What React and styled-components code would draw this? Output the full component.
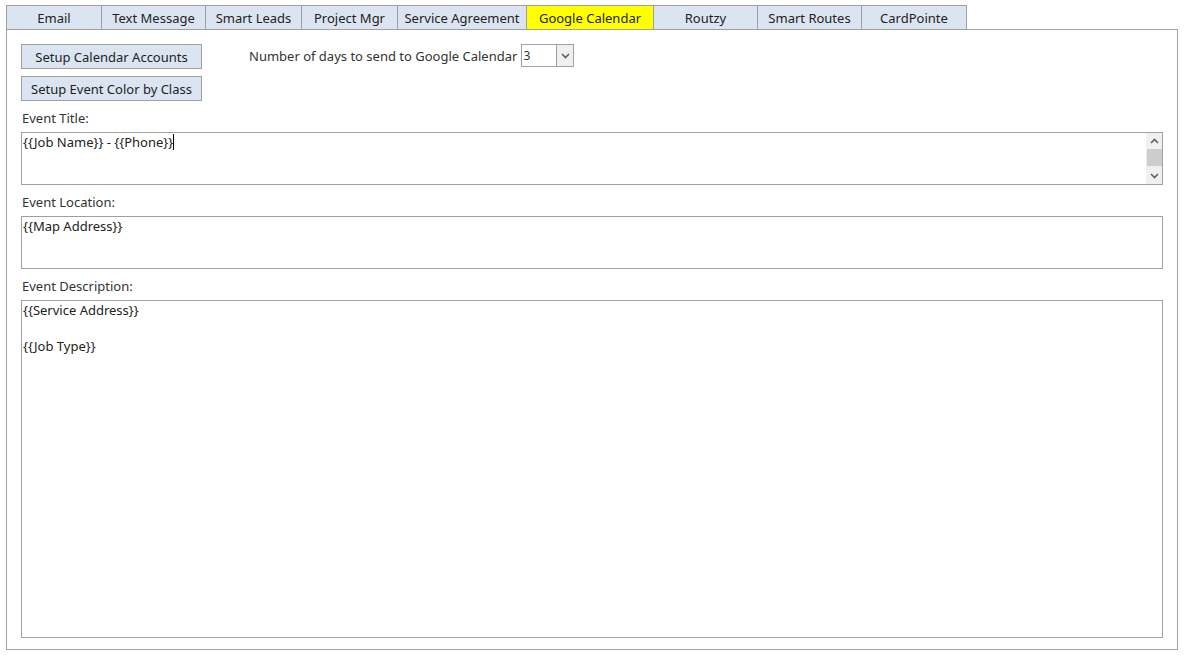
import React from "react";
import styled, { createGlobalStyle } from "styled-components";

const GlobalStyle = createGlobalStyle`
  body {
    margin: 0;
    background: #ffffff;
    font-family: "Noto Sans", "Open Sans", sans-serif;
    font-size: 13px;
    color: #222;
  }
`;

const Page = styled.div`
  width: 1185px;
  height: 655px;
  padding: 5px 7px 5px 6px;
  box-sizing: border-box;
  display: flex;
  flex-direction: column;
`;

const TabBar = styled.div`
  display: flex;
  height: 24px;
`;

const Tab = styled.div`
  width: ${(p) => p.w}px;
  box-sizing: border-box;
  border: 1px solid #a0a0a0;
  border-left-width: ${(p) => (p.first ? 1 : 0)}px;
  border-bottom: none;
  background: ${(p) => (p.active ? "#ffff00" : "#dbe5f1")};
  display: flex;
  align-items: center;
  justify-content: center;
  white-space: nowrap;
  font-size: 13px;
  color: #222;
`;

const Panel = styled.div`
  flex: 1;
  border: 1px solid #a0a0a0;
  padding: 14px 14px 11px 14px;
  display: flex;
  flex-direction: column;
`;

const TopRow = styled.div`
  display: flex;
  gap: 47px;
`;

const ButtonCol = styled.div`
  display: flex;
  flex-direction: column;
  gap: 7px;
`;

const Button = styled.div`
  width: 181px;
  height: 25px;
  box-sizing: border-box;
  border: 1px solid #a0a0a0;
  background: #dbe5f1;
  display: flex;
  align-items: center;
  justify-content: center;
  font-size: 13px;
  color: #222;
`;

const DaysRow = styled.div`
  display: flex;
  align-items: center;
  height: 23px;
  gap: 4px;
  color: #333;
`;

const Select = styled.div`
  width: 53px;
  height: 23px;
  box-sizing: border-box;
  border: 1px solid #a0a0a0;
  display: flex;
  align-items: stretch;
`;

const SelectValue = styled.div`
  flex: 1;
  padding-left: 1px;
  display: flex;
  align-items: center;
  font-size: 12px;
`;

const SelectArrow = styled.div`
  width: 16px;
  border-left: 1px solid #a0a0a0;
  background: #f0f0f0;
  display: flex;
  align-items: center;
  justify-content: center;
`;

const Label = styled.div`
  margin-top: ${(p) => p.top}px;
  height: 17px;
  line-height: 17px;
  color: #333;
  padding-left: 1px;
`;

const Field = styled.div`
  margin-top: 5px;
  height: ${(p) => p.h}px;
  ${(p) => (p.grow ? "flex: 1;" : "")}
  box-sizing: border-box;
  width: 1142px;
  border: 1px solid #a0a0a0;
  display: flex;
`;

const FieldText = styled.div`
  flex: 1;
  padding: 0 1px;
  line-height: 18px;
  white-space: pre-wrap;
  color: #222;
`;

const Caret = styled.span`
  display: inline-block;
  width: 1px;
  height: 16px;
  background: #000;
  vertical-align: -3px;
`;

const ScrollBar = styled.div`
  width: 16px;
  background: #f0f0f0;
  display: flex;
  flex-direction: column;
  align-items: center;
`;

const ScrollBtn = styled.div`
  height: 16px;
  width: 16px;
  display: flex;
  align-items: center;
  justify-content: center;
`;

const Thumb = styled.div`
  width: 15px;
  height: 17px;
  background: #cdcdcd;
`;

const Chevron = ({ up }) => (
  <svg width="9" height="6" viewBox="0 0 9 6">
    <path
      d={up ? "M1 5 L4.5 1.5 L8 5" : "M1 1 L4.5 4.5 L8 1"}
      fill="none"
      stroke="#606060"
      strokeWidth="1.6"
    />
  </svg>
);

const tabs = [
  ["Email", 96],
  ["Text Message", 104],
  ["Smart Leads", 96],
  ["Project Mgr", 96],
  ["Service Agreement", 129],
  ["Google Calendar", 127],
  ["Routzy", 104],
  ["Smart Routes", 104],
  ["CardPointe", 105],
];

export default function App() {
  return (
    <>
      <GlobalStyle />
      <Page>
        <TabBar>
          {tabs.map(([name, w], i) => (
            <Tab key={name} w={w} first={i === 0} active={name === "Google Calendar"}>
              {name}
            </Tab>
          ))}
        </TabBar>
        <Panel>
          <TopRow>
            <ButtonCol>
              <Button>Setup Calendar Accounts</Button>
              <Button>Setup Event Color by Class</Button>
            </ButtonCol>
            <DaysRow>
              Number of days to send to Google Calendar
              <Select>
                <SelectValue>3</SelectValue>
                <SelectArrow>
                  <Chevron />
                </SelectArrow>
              </Select>
            </DaysRow>
          </TopRow>

          <Label top={9}>Event Title:</Label>
          <Field h={53}>
            <FieldText>
              {"{{Job Name}} - {{Phone}}"}
              <Caret />
            </FieldText>
            <ScrollBar>
              <ScrollBtn>
                <Chevron up />
              </ScrollBtn>
              <Thumb />
              <div style={{ flex: 1 }} />
              <ScrollBtn>
                <Chevron />
              </ScrollBtn>
            </ScrollBar>
          </Field>

          <Label top={9}>Event Location:</Label>
          <Field h={53}>
            <FieldText>{"{{Map Address}}"}</FieldText>
          </Field>

          <Label top={9}>Event Description:</Label>
          <Field grow>
            <FieldText>{"{{Service Address}}\n\n{{Job Type}}"}</FieldText>
          </Field>
        </Panel>
      </Page>
    </>
  );
}
